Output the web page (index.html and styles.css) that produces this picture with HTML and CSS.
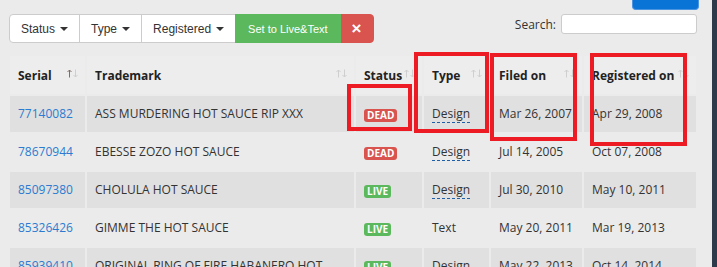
FILE: index.html
```html
<!DOCTYPE html>
<html>
<head>
<meta charset="utf-8">
<link rel="stylesheet" href="styles.css">
</head>
<body>
<div class="page">
  <main class="main">
    <div class="topbar"><button class="btn-cut" type="button"></button></div>
    <div class="controls">
      <div class="btn-group">
        <button class="btn btn-default" type="button">Status<span class="caret"></span></button>
        <button class="btn btn-default" type="button">Type<span class="caret"></span></button>
        <button class="btn btn-default" type="button">Registered<span class="caret"></span></button>
        <button class="btn btn-success" type="button">Set to Live&amp;Text</button>
        <button class="btn btn-danger" type="button">&times;</button>
      </div>
      <label class="search">Search:<input type="text"></label>
    </div>
    <table class="grid">
      <colgroup>
        <col class="c-serial"><col class="c-tm"><col class="c-status"><col class="c-type"><col class="c-filed"><col class="c-reg">
      </colgroup>
      <thead>
        <tr>
          <th><div class="th-in"><span>Serial</span><svg class="sort active" width="11" height="9" viewBox="0 0 11 9"><path class="up" d="M2.5 8.5V1M0.5 3L2.5 1L4.5 3"/><path class="down" d="M8.5 0.5V8M6.5 6L8.5 8L10.5 6"/></svg></div></th>
          <th><div class="th-in"><span>Trademark</span><svg class="sort" width="11" height="9" viewBox="0 0 11 9"><path class="up" d="M2.5 8.5V1M0.5 3L2.5 1L4.5 3"/><path class="down" d="M8.5 0.5V8M6.5 6L8.5 8L10.5 6"/></svg></div></th>
          <th><div class="th-in"><span>Status</span><svg class="sort" width="11" height="9" viewBox="0 0 11 9"><path class="up" d="M2.5 8.5V1M0.5 3L2.5 1L4.5 3"/><path class="down" d="M8.5 0.5V8M6.5 6L8.5 8L10.5 6"/></svg></div></th>
          <th><div class="th-in"><span>Type</span><svg class="sort" width="11" height="9" viewBox="0 0 11 9"><path class="up" d="M2.5 8.5V1M0.5 3L2.5 1L4.5 3"/><path class="down" d="M8.5 0.5V8M6.5 6L8.5 8L10.5 6"/></svg></div></th>
          <th><div class="th-in"><span>Filed on</span><svg class="sort" width="11" height="9" viewBox="0 0 11 9"><path class="up" d="M2.5 8.5V1M0.5 3L2.5 1L4.5 3"/><path class="down" d="M8.5 0.5V8M6.5 6L8.5 8L10.5 6"/></svg></div></th>
          <th><div class="th-in"><span>Registered on</span><svg class="sort" width="11" height="9" viewBox="0 0 11 9"><path class="up" d="M2.5 8.5V1M0.5 3L2.5 1L4.5 3"/><path class="down" d="M8.5 0.5V8M6.5 6L8.5 8L10.5 6"/></svg></div></th>
        </tr>
      </thead>
      <tbody>
        <tr class="odd">
          <td><a href="#">77140082</a></td>
          <td>ASS MURDERING HOT SAUCE RIP XXX</td>
          <td><span class="label label-dead">DEAD</span></td>
          <td><abbr class="kind">Design</abbr></td>
          <td>Mar 26, 2007</td>
          <td>Apr 29, 2008</td>
        </tr>
        <tr>
          <td><a href="#">78670944</a></td>
          <td>EBESSE ZOZO HOT SAUCE</td>
          <td><span class="label label-dead">DEAD</span></td>
          <td><abbr class="kind">Design</abbr></td>
          <td>Jul 14, 2005</td>
          <td>Oct 07, 2008</td>
        </tr>
        <tr class="odd">
          <td><a href="#">85097380</a></td>
          <td>CHOLULA HOT SAUCE</td>
          <td><span class="label label-live">LIVE</span></td>
          <td><abbr class="kind">Design</abbr></td>
          <td>Jul 30, 2010</td>
          <td>May 10, 2011</td>
        </tr>
        <tr>
          <td><a href="#">85326426</a></td>
          <td>GIMME THE HOT SAUCE</td>
          <td><span class="label label-live">LIVE</span></td>
          <td>Text</td>
          <td>May 20, 2011</td>
          <td>Mar 19, 2013</td>
        </tr>
        <tr class="odd">
          <td><a href="#">85939410</a></td>
          <td>ORIGINAL RING OF FIRE HABANERO HOT SAUCE</td>
          <td><span class="label label-live">LIVE</span></td>
          <td><abbr class="kind">Design</abbr></td>
          <td>May 22, 2013</td>
          <td>Oct 14, 2014</td>
        </tr>
      </tbody>
    </table>
  </main>
  <div class="rail"></div>
</div>
<div class="annot annot-status"></div>
<div class="annot annot-type"></div>
<div class="annot annot-filed"></div>
<div class="annot annot-reg"></div>
</body>
</html>
```

FILE: styles.css
```css
html, body {
  margin: 0;
  padding: 0;
}
body {
  background: #ebebeb;
  font-family: "Open Sans", "Noto Sans", sans-serif;
  font-size: 12px;
  color: #333;
  width: 717px;
  height: 267px;
  overflow: hidden;
  position: relative;
}
.page {
  display: flex;
  height: 267px;
}
.main {
  width: 690px;
  padding: 0 14px 0 8px;
}
.rail {
  width: 5px;
  background: #2c3a4b;
}

/* top cut-off button */
.topbar {
  display: flex;
  justify-content: flex-end;
  height: 10px;
}
.btn-cut {
  width: 67px;
  height: 10px;
  margin-right: -1px;
  border: 1px solid #4a94e0;
  border-top: 0;
  border-radius: 0 0 4px 4px;
  background: #0a74d6;
  padding: 0;
}

/* controls */
.controls {
  margin-top: 4px;
  display: flex;
  justify-content: space-between;
  align-items: flex-start;
}
.btn-group {
  display: flex;
  height: 29px;
  margin-left: 1px;
}
.btn {
  font-family: "Liberation Sans", Arial, sans-serif;
  font-size: 12px;
  height: 29px;
  margin: 0;
  padding: 0 11px;
  border: 1px solid #ccc;
  background: #fff;
  color: #333;
  display: flex;
  align-items: center;
  cursor: pointer;
}
.btn + .btn {
  margin-left: -1px;
}
.btn:first-child {
  border-radius: 4px 0 0 4px;
}
.btn:last-child {
  border-radius: 0 4px 4px 0;
}
.caret {
  display: inline-block;
  width: 0;
  height: 0;
  margin-left: 5px;
  margin-top: 1px;
  border-top: 4px solid #333;
  border-left: 4px solid transparent;
  border-right: 4px solid transparent;
}
.btn-success {
  background: #5cb85c;
  border-color: #5cb85c;
  color: #fff;
  font-size: 11px;
  padding: 0 12px;
  position: relative;
}
.btn-danger {
  background: #d9534f;
  border-color: #d9534f;
  color: #fff;
  font-size: 17px;
  font-weight: bold;
  padding: 0 11px;
}

.search {
  display: flex;
  align-items: center;
  gap: 5px;
  height: 20px;
  margin-right: 1px;
  font-size: 12px;
  color: #333;
}
.search input {
  width: 136px;
  height: 20px;
  box-sizing: border-box;
  border: 1px solid #ccc;
  border-radius: 3px;
  background: #fff;
  margin: 0;
  padding: 0 4px;
}

/* table */
.grid {
  margin-top: 11px;
  width: 690px;
  table-layout: fixed;
  border-collapse: separate;
  border-spacing: 2px;
}
.c-serial { width: 75px; }
.c-tm { width: 267px; }
.c-status { width: 66px; }
.c-type { width: 65px; }
.c-filed { width: 91px; }
.c-reg { width: 112px; }

.grid th {
  height: 38px;
  padding: 0 7px 0 8px;
  background: #ededed;
  text-align: left;
  font-weight: bold;
  color: #222;
  box-sizing: border-box;
}
.th-in {
  display: flex;
  justify-content: space-between;
  align-items: center;
}
.sort {
  margin-top: -3px;
  flex: none;
}
.sort path {
  fill: none;
  stroke: #cfcfcf;
  stroke-width: 1;
}
.sort.active .up {
  stroke: #7d6e6a;
}
.grid td {
  padding: 8px 8px;
  line-height: 20px;
  vertical-align: top;
  box-sizing: border-box;
}
.grid tr.odd td {
  background: #e0e0e0;
}
.grid a {
  color: #2a7bd1;
  text-decoration: none;
}
.kind {
  text-decoration: none;
  border-bottom: 1px dashed #1f5ea8;
  color: #333;
}
.label {
  display: inline-block;
  font-size: 10px;
  line-height: 11px;
  font-weight: bold;
  color: #fff;
  padding: 1px 3px 1px;
  border-radius: 3px;
  vertical-align: -1px;
}
.label-dead { background: #d9534f; }
.label-live { background: #5cb85c; }

/* annotation overlays */
.annot {
  position: absolute;
  border: 4px solid #ed1c24;
  box-sizing: border-box;
}
.annot-status { left: 347px; top: 84px; width: 65px; height: 47px; }
.annot-type { left: 414px; top: 52px; width: 75px; height: 81px; }
.annot-filed { left: 490px; top: 53px; width: 87px; height: 88px; }
.annot-reg { left: 590px; top: 53px; width: 97px; height: 93px; }
```
